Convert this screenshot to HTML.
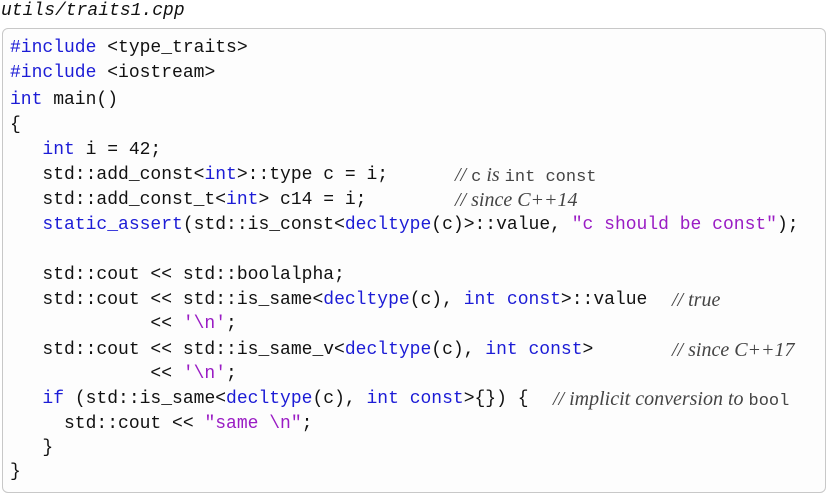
<!DOCTYPE html>
<html><head><style>
body{margin:0;width:828px;height:495px;background:#fff;position:relative;overflow:hidden}
.t{position:absolute;left:1px;top:1px;font:italic 18px "Liberation Mono",monospace;color:#111}
.box{position:absolute;left:2px;top:28px;width:822px;height:463px;border:1px solid #c8c8c8;border-radius:6px;background:#fdfdfd}
.l{position:absolute;left:10px;height:25px;line-height:25px;font:18px/25px "Liberation Mono",monospace;color:#111;white-space:pre}
.k{color:#1c1cd6}.s{color:#9a1cc4}
.c{position:absolute;font:italic 20px/25px "Liberation Serif",serif;color:#444;white-space:pre}
.c tt{font:normal 17px "Liberation Mono",monospace;color:#444}
</style></head><body>
<div class="t">utils/traits1.cpp</div>
<div class="box"></div>
<div class="l" style="top:36px"><span class="k">#include</span> &lt;type_traits&gt;</div>
<div class="l" style="top:61px"><span class="k">#include</span> &lt;iostream&gt;</div>
<div class="l" style="top:88px"><span class="k">int</span> main()</div>
<div class="l" style="top:113px">{</div>
<div class="l" style="top:138px">   <span class="k">int</span> i = 42;</div>
<div class="l" style="top:163px">   std::add_const&lt;<span class="k">int</span>&gt;::type c = i;</div>
<div class="l" style="top:188px">   std::add_const_t&lt;<span class="k">int</span>&gt; c14 = i;</div>
<div class="l" style="top:213px">   <span class="k">static_assert</span>(std::is_const&lt;<span class="k">decltype</span>(c)&gt;::value, <span class="s">"c should be const"</span>);</div>
<div class="l" style="top:263px">   std::cout &lt;&lt; std::boolalpha;</div>
<div class="l" style="top:288px">   std::cout &lt;&lt; std::is_same&lt;<span class="k">decltype</span>(c), <span class="k">int const</span>&gt;::value</div>
<div class="l" style="top:312px">             &lt;&lt; <span class="s">'\n'</span>;</div>
<div class="l" style="top:338px">   std::cout &lt;&lt; std::is_same_v&lt;<span class="k">decltype</span>(c), <span class="k">int const</span>&gt;</div>
<div class="l" style="top:362px">             &lt;&lt; <span class="s">'\n'</span>;</div>
<div class="l" style="top:387px">   <span class="k">if</span> (std::is_same&lt;<span class="k">decltype</span>(c), <span class="k">int const</span>&gt;{}) {</div>
<div class="l" style="top:412px">     std::cout &lt;&lt; <span class="s">"same \n"</span>;</div>
<div class="l" style="top:436px">   }</div>
<div class="l" style="top:460px">}</div>
<div class="c" style="left:455px;top:163px">// <tt>c</tt> is <tt>int const</tt></div>
<div class="c" style="left:455px;top:188px">// since C++14</div>
<div class="c" style="left:672px;top:288px">// true</div>
<div class="c" style="left:672px;top:338px">// since C++17</div>
<div class="c" style="left:553px;top:387px">// implicit conversion to <tt>bool</tt></div>
</body></html>
